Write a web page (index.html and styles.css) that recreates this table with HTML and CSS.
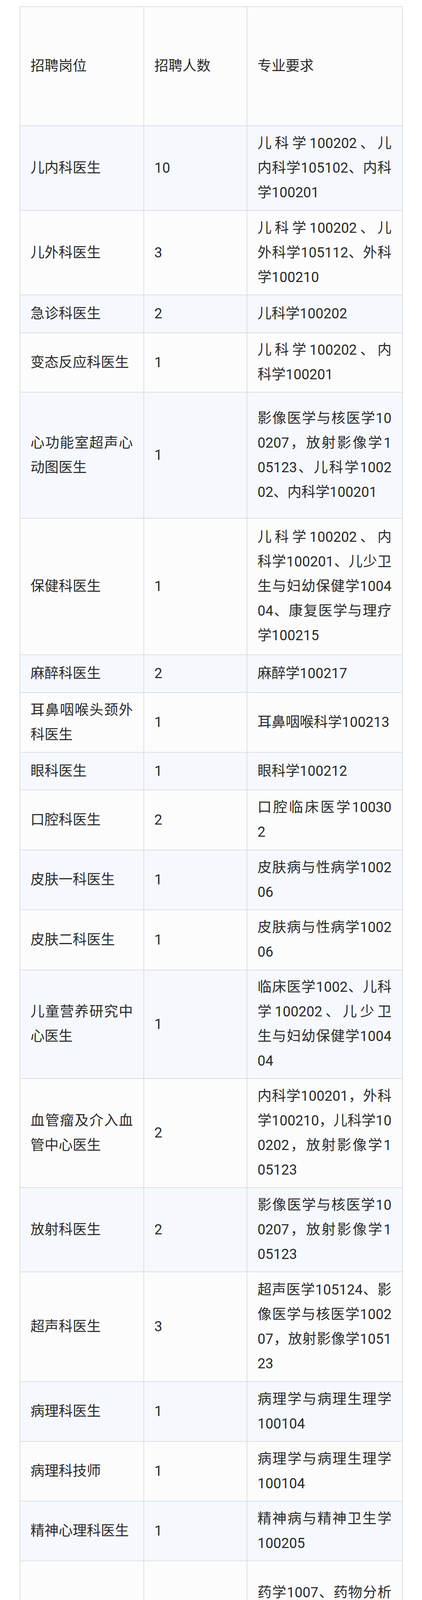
FILE: index.html
```html
<!DOCTYPE html>
<html lang="zh-CN">
<head>
<meta charset="utf-8">
<title>招聘岗位</title>
<link rel="stylesheet" href="styles.css">
</head>
<body>
<table class="jobs">
  <colgroup>
    <col class="c1">
    <col class="c2">
    <col class="c3">
  </colgroup>
  <thead>
    <tr><th><span class="ln">招聘岗位</span></th><th><span class="ln">招聘人数</span></th><th><span class="ln">专业要求</span></th></tr>
  </thead>
  <tbody>
    <tr>
      <td><span class="ln">儿内科医生</span></td><td><span class="ln">10</span></td>
      <td><span class="ln">儿科学100202、儿</span><span class="ln">内科学105102、内科</span><span class="ln">学100201</span></td>
    </tr>
    <tr>
      <td><span class="ln">儿外科医生</span></td><td><span class="ln">3</span></td>
      <td><span class="ln">儿科学100202、儿</span><span class="ln">外科学105112、外科</span><span class="ln">学100210</span></td>
    </tr>
    <tr>
      <td><span class="ln">急诊科医生</span></td><td><span class="ln">2</span></td>
      <td><span class="ln">儿科学100202</span></td>
    </tr>
    <tr>
      <td><span class="ln">变态反应科医生</span></td><td><span class="ln">1</span></td>
      <td><span class="ln">儿科学100202、内</span><span class="ln">科学100201</span></td>
    </tr>
    <tr>
      <td><span class="ln">心功能室超声心</span><span class="ln">动图医生</span></td><td><span class="ln">1</span></td>
      <td><span class="ln">影像医学与核医学10</span><span class="ln">0207，放射影像学1</span><span class="ln">05123、儿科学1002</span><span class="ln">02、内科学100201</span></td>
    </tr>
    <tr>
      <td><span class="ln">保健科医生</span></td><td><span class="ln">1</span></td>
      <td><span class="ln">儿科学100202、内</span><span class="ln">科学100201、儿少卫</span><span class="ln">生与妇幼保健学1004</span><span class="ln">04、康复医学与理疗</span><span class="ln">学100215</span></td>
    </tr>
    <tr>
      <td><span class="ln">麻醉科医生</span></td><td><span class="ln">2</span></td>
      <td><span class="ln">麻醉学100217</span></td>
    </tr>
    <tr>
      <td><span class="ln">耳鼻咽喉头颈外</span><span class="ln">科医生</span></td><td><span class="ln">1</span></td>
      <td><span class="ln">耳鼻咽喉科学100213</span></td>
    </tr>
    <tr>
      <td><span class="ln">眼科医生</span></td><td><span class="ln">1</span></td>
      <td><span class="ln">眼科学100212</span></td>
    </tr>
    <tr>
      <td><span class="ln">口腔科医生</span></td><td><span class="ln">2</span></td>
      <td><span class="ln">口腔临床医学10030</span><span class="ln">2</span></td>
    </tr>
    <tr>
      <td><span class="ln">皮肤一科医生</span></td><td><span class="ln">1</span></td>
      <td><span class="ln">皮肤病与性病学1002</span><span class="ln">06</span></td>
    </tr>
    <tr>
      <td><span class="ln">皮肤二科医生</span></td><td><span class="ln">1</span></td>
      <td><span class="ln">皮肤病与性病学1002</span><span class="ln">06</span></td>
    </tr>
    <tr>
      <td><span class="ln">儿童营养研究中</span><span class="ln">心医生</span></td><td><span class="ln">1</span></td>
      <td><span class="ln">临床医学1002、儿科</span><span class="ln">学100202、儿少卫</span><span class="ln">生与妇幼保健学1004</span><span class="ln">04</span></td>
    </tr>
    <tr>
      <td><span class="ln">血管瘤及介入血</span><span class="ln">管中心医生</span></td><td><span class="ln">2</span></td>
      <td><span class="ln">内科学100201，外科</span><span class="ln">学100210，儿科学10</span><span class="ln">0202，放射影像学1</span><span class="ln">05123</span></td>
    </tr>
    <tr>
      <td><span class="ln">放射科医生</span></td><td><span class="ln">2</span></td>
      <td><span class="ln">影像医学与核医学10</span><span class="ln">0207，放射影像学1</span><span class="ln">05123</span></td>
    </tr>
    <tr>
      <td><span class="ln">超声科医生</span></td><td><span class="ln">3</span></td>
      <td><span class="ln">超声医学105124、影</span><span class="ln">像医学与核医学1002</span><span class="ln">07，放射影像学1051</span><span class="ln">23</span></td>
    </tr>
    <tr>
      <td><span class="ln">病理科医生</span></td><td><span class="ln">1</span></td>
      <td><span class="ln">病理学与病理生理学</span><span class="ln">100104</span></td>
    </tr>
    <tr>
      <td><span class="ln">病理科技师</span></td><td><span class="ln">1</span></td>
      <td><span class="ln">病理学与病理生理学</span><span class="ln">100104</span></td>
    </tr>
    <tr>
      <td><span class="ln">精神心理科医生</span></td><td><span class="ln">1</span></td>
      <td><span class="ln">精神病与精神卫生学</span><span class="ln">100205</span></td>
    </tr>
    <tr>
      <td><span class="ln">药学部临床药师</span></td><td><span class="ln">1</span></td>
      <td><span class="ln">药学1007、药物分析</span><span class="ln">学100704、药物化</span><span class="ln">学100701、药理学10</span><span class="ln">0706</span></td>
    </tr>
    <tr>
      <td><span class="ln">检验中心检验技</span><span class="ln">师</span></td><td><span class="ln">1</span></td>
      <td><span class="ln">生物化学与分子生物</span><span class="ln">学071010、基础医学</span><span class="ln">1001、细胞生物学07</span><span class="ln">1009、遗传学07100</span><span class="ln">7</span></td>
    </tr>
    <tr>
      <td><span class="ln">输血科技师</span></td><td><span class="ln">1</span></td>
      <td><span class="ln">输血医学1002Z7、</span><span class="ln">临床医学1002、基础</span><span class="ln">医学1001</span></td>
    </tr>
    <tr>
      <td><span class="ln">遗传学研究室科</span><span class="ln">研人员</span></td><td><span class="ln">1</span></td>
      <td><span class="ln">生物学0710、遗传学</span><span class="ln">071007、神经生物</span><span class="ln">学071006、生物化</span><span class="ln">学与分子生物学0710</span><span class="ln">10</span></td>
    </tr>
    <tr>
      <td><span class="ln">实验中心科研人</span><span class="ln">员</span></td><td><span class="ln">1</span></td>
      <td><span class="ln">生物学0710、免疫学</span><span class="ln">100102、病原生物学</span><span class="ln">100103、微生物学0</span><span class="ln">71005、生物化学和</span><span class="ln">分子生物学071010、</span><span class="ln">细胞生物学071009</span></td>
    </tr>
  </tbody>
</table>
</body>
</html>
```

FILE: styles.css
```css
html, body {
  margin: 0;
  padding: 0;
  background: #ffffff;
}

body {
  font-family: Roboto, "Noto Sans CJK SC", sans-serif;
  font-size: 36px;
  line-height: 63px;
  color: #2a2a2a;
}

.jobs {
  border-collapse: collapse;
  table-layout: fixed;
  width: 979px;
  margin: 16px 0 0 50px;
}

.jobs .c1 { width: 317px; }
.jobs .c2 { width: 264px; }
.jobs .c3 { width: 398px; }

.jobs th,
.jobs td {
  border: 2px solid #dcdfe3;
  padding: 0 27px 0 26px;
  vertical-align: middle;
  text-align: left;
  font-weight: 400;
  line-height: 63px;
}

.jobs thead tr {
  background: #fcfcfd;
  height: 305px;
}

.jobs tbody tr:nth-child(odd) { background: #f5f8fc; }
.jobs tbody tr:nth-child(even) { background: #fcfcfd; }

.ln {
  display: block;
  height: 63px;
  text-align-last: justify;
}

.ln:last-child {
  text-align-last: auto;
}

/* row heights (border centre to border centre) */
.jobs tbody tr:nth-child(1) { height: 217px; }
.jobs tbody tr:nth-child(2) { height: 216px; }
.jobs tbody tr:nth-child(3) { height: 97px; }
.jobs tbody tr:nth-child(4) { height: 152px; }
.jobs tbody tr:nth-child(5) { height: 323px; }
.jobs tbody tr:nth-child(6) { height: 349px; }
.jobs tbody tr:nth-child(7) { height: 97px; }
.jobs tbody tr:nth-child(8) { height: 153px; }
.jobs tbody tr:nth-child(9) { height: 96px; }
.jobs tbody tr:nth-child(10) { height: 154px; }
.jobs tbody tr:nth-child(11) { height: 153px; }
.jobs tbody tr:nth-child(12) { height: 154px; }
.jobs tbody tr:nth-child(13) { height: 278px; }
.jobs tbody tr:nth-child(14) { height: 279px; }
.jobs tbody tr:nth-child(15) { height: 216px; }
.jobs tbody tr:nth-child(16) { height: 281px; }
.jobs tbody tr:nth-child(17) { height: 153px; }
.jobs tbody tr:nth-child(18) { height: 153px; }
.jobs tbody tr:nth-child(19) { height: 153px; }
.jobs tbody tr:nth-child(20) { height: 352px; }
.jobs tbody tr:nth-child(21) { height: 345px; }
.jobs tbody tr:nth-child(22) { height: 282px; }
.jobs tbody tr:nth-child(23) { height: 353px; }
.jobs tbody tr:nth-child(24) { height: 420px; }
```
